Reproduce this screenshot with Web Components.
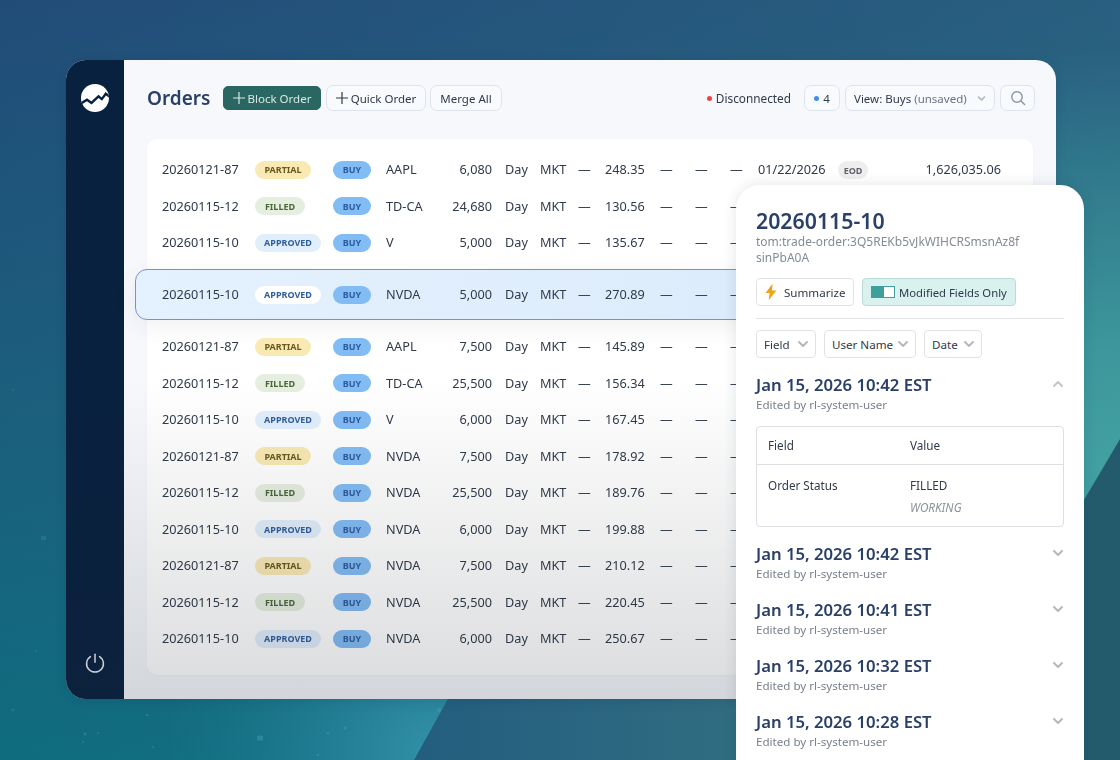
<!DOCTYPE html>
<html lang="en">
<head>
<meta charset="utf-8">
<title>Orders</title>
<style>
html,body{margin:0;padding:0;background:#1d4a72}
body{font-family:"Noto Sans","Liberation Sans",sans-serif;font-size:13px;color:#2f3a4a}
</style>
</head>
<body>
<app-stage>
  <orders-window>
    <order-row id="20260121-87" status="PARTIAL" sym="AAPL" qty="6,080" price="248.35" date="01/22/2026" tif="EOD" amount="1,626,035.06"></order-row>
    <order-row id="20260115-12" status="FILLED" sym="TD-CA" qty="24,680" price="130.56"></order-row>
    <order-row id="20260115-10" status="APPROVED" sym="V" qty="5,000" price="135.67"></order-row>
    <order-row id="20260115-10" status="APPROVED" sym="NVDA" qty="5,000" price="270.89" selected></order-row>
    <order-row id="20260121-87" status="PARTIAL" sym="AAPL" qty="7,500" price="145.89"></order-row>
    <order-row id="20260115-12" status="FILLED" sym="TD-CA" qty="25,500" price="156.34"></order-row>
    <order-row id="20260115-10" status="APPROVED" sym="V" qty="6,000" price="167.45"></order-row>
    <order-row id="20260121-87" status="PARTIAL" sym="NVDA" qty="7,500" price="178.92"></order-row>
    <order-row id="20260115-12" status="FILLED" sym="NVDA" qty="25,500" price="189.76"></order-row>
    <order-row id="20260115-10" status="APPROVED" sym="NVDA" qty="6,000" price="199.88"></order-row>
    <order-row id="20260121-87" status="PARTIAL" sym="NVDA" qty="7,500" price="210.12"></order-row>
    <order-row id="20260115-12" status="FILLED" sym="NVDA" qty="25,500" price="220.45"></order-row>
    <order-row id="20260115-10" status="APPROVED" sym="NVDA" qty="6,000" price="250.67"></order-row>
  </orders-window>
  <detail-panel slot="panel">
    <history-entry when="Jan 15, 2026 10:42 EST" open>
      <change-table></change-table>
    </history-entry>
    <history-entry when="Jan 15, 2026 10:42 EST"></history-entry>
    <history-entry when="Jan 15, 2026 10:41 EST"></history-entry>
    <history-entry when="Jan 15, 2026 10:32 EST"></history-entry>
    <history-entry when="Jan 15, 2026 10:28 EST"></history-entry>
  </detail-panel>
</app-stage>

<script>
const CHEV = (w,c,up)=>`<svg width="${w}" height="${w}" viewBox="0 0 12 12" fill="none" stroke="${c}" stroke-width="2" stroke-linecap="round" stroke-linejoin="round" aria-hidden="true"><path d="${up?'M2 8l4-4 4 4':'M2 4l4 4 4-4'}"/></svg>`;
const PLUS = `<svg width="12" height="12" viewBox="0 0 12 12" fill="none" stroke="currentColor" stroke-width="1.2" aria-hidden="true"><path d="M6 0v12M0 6h12"/></svg>`;

class AppStage extends HTMLElement{
  constructor(){super();this.attachShadow({mode:'open'}).innerHTML=`
  <style>
    :host{display:block;position:relative;width:1120px;height:760px;overflow:hidden;box-sizing:border-box;padding:60px 64px 0 66px;
      background:
        radial-gradient(640px 420px at 1120px 470px,#42a1a1 0,rgba(66,161,161,.8) 30%,rgba(66,161,161,0) 100%),
        linear-gradient(90deg,rgba(60,135,145,0) 0,rgba(60,135,145,.32) 100%),
        linear-gradient(180deg,#214c78 0,#1b5f7d 55%,#0f6c7f 100%);}
    svg.bg{position:absolute;inset:0;width:1120px;height:760px}
    .w{position:relative}
    ::slotted([slot=panel]){position:absolute;left:736px;top:185px}
  </style>
  <svg class="bg" viewBox="0 0 1120 760" aria-hidden="true">
    <defs>
      <linearGradient id="d" gradientUnits="userSpaceOnUse" x1="420" x2="1120" y1="0" y2="0"><stop offset="0" stop-color="#235e7f"/><stop offset=".45" stop-color="#306d81"/><stop offset="1" stop-color="#235a6b"/></linearGradient>
      <radialGradient id="l" cx="435" cy="750" r="270" gradientUnits="userSpaceOnUse"><stop offset="0" stop-color="#3290a8"/><stop offset="1" stop-color="#1c7a93" stop-opacity="0"/></radialGradient>
    </defs>
    <rect x="100" y="560" width="400" height="200" fill="url(#l)"/>
    <polygon points="1120,439 1084,500 1040,575 503,600 414,760 1120,760" fill="url(#d)"/>
    <g fill="#4fb0ba" opacity=".35">
      <rect x="257" y="735.5" width="6" height="5" rx="1.5"/><circle cx="439" cy="710" r="2"/>
      <circle cx="85" cy="734" r="1.4"/><circle cx="83" cy="742" r="1"/><circle cx="147" cy="715" r="1.2"/><circle cx="98" cy="733" r="1"/>
      <circle cx="345" cy="728" r="1.6"/><circle cx="328" cy="733" r="1.2"/><circle cx="318" cy="755" r="1.2"/><circle cx="153" cy="747" r=".9"/>
      <circle cx="13" cy="390" r="1.2" opacity=".5"/><rect x="41" y="536" width="5" height="4" opacity=".6"/><circle cx="36" cy="651" r="1.4" opacity=".5"/><circle cx="13" cy="710" r="1.6" opacity=".6"/>
    </g>
  </svg>
  <div class="w"><slot></slot></div>
  <slot name="panel"></slot>`;}
}
customElements.define('app-stage',AppStage);

class SideRail extends HTMLElement{
  constructor(){super();this.attachShadow({mode:'open'}).innerHTML=`
  <style>
    :host{display:flex;flex-direction:column;align-items:center;justify-content:space-between;width:58px;flex:none;background:#08213f;padding:24px 0 26px;box-sizing:border-box;align-self:stretch}
    svg{display:block}
  </style>
  <svg width="28" height="28" viewBox="0 0 28 28" aria-hidden="true">
    <defs><clipPath id="c"><circle cx="14" cy="14" r="14"/></clipPath></defs>
    <circle cx="14" cy="14" r="14" fill="#fff"/>
    <path clip-path="url(#c)" d="M0 19.5l6-3.8 4.5 3.2 7-6.6 3.3 2.8 4-5.4L29 13" fill="none" stroke="#08213f" stroke-width="2.4" stroke-linejoin="miter"/>
  </svg>
  <svg width="20" height="20" viewBox="0 0 20 20" fill="none" stroke="#e6ebf1" stroke-width="1.5" stroke-linecap="round" aria-hidden="true">
    <path d="M10 1.2v8"/><path d="M5.4 3.6a8.4 8.4 0 1 0 9.2 0"/>
  </svg>`;}
}
customElements.define('side-rail',SideRail);

class UiButton extends HTMLElement{
  constructor(){super();this.attachShadow({mode:'open'}).innerHTML=`
  <style>
    :host{display:inline-flex;align-items:center;justify-content:center;gap:3px;box-sizing:border-box;height:26px;padding:0 8px;border:1px solid #dfe4ec;border-radius:7px;background:#f8fafd;color:#2f3a4a;font-size:11.5px;white-space:nowrap}
    :host([primary]){background:#2a6662;border-color:#2a6662;color:#d9e8e6;height:24px;border-radius:5px;margin-right:1px}
  </style><slot></slot>`;}
}
customElements.define('ui-button',UiButton);

class StatusPill extends HTMLElement{
  constructor(){super();this.attachShadow({mode:'open'}).innerHTML=`
  <style>
    :host{display:inline-flex;align-items:center;justify-content:center;box-sizing:border-box;height:18px;padding:0 9px;margin-top:1px;border-radius:9px;font-size:9px;font-weight:700;white-space:nowrap}
    :host([kind=PARTIAL]){background:#f9eab4;color:#6b5a1e;width:56px;padding:0}
    :host([kind=FILLED]){background:#e6eee0;color:#48683a;width:50px;padding:0}
    :host([kind=APPROVED]){background:#e1eefc;color:#2f5f9e;width:66px;padding:0}
    :host([kind=BUY]){background:#82bcf5;color:#2d5a9c;width:38px;padding:0}
    :host([kind=EOD]){background:#eeeeee;color:#5f636a;padding:0;width:30px}
    :host([kind=APPROVED][on]){background:#fff}
  </style><slot></slot>`;}
}
customElements.define('status-pill',StatusPill);

class OrderRow extends HTMLElement{
  constructor(){
    super();
    const a=n=>this.getAttribute(n)||'';
    const dash='<span class="d">—</span>';
    const on=this.hasAttribute('selected')?'on':'';
    this.attachShadow({mode:'open'}).innerHTML=`
    <style>
      :host{display:grid;grid-template-columns:93px 78px 53px 50px 56px 13px 35px 38px 27px 55px 35px 35px 28px 80px 50px 113px;align-items:center;height:36.5px;padding-left:15px;font-size:12.7px;color:#2f3a4a;white-space:nowrap}
      :host([selected]){box-sizing:border-box;height:51px;margin:8px -12px 8.25px;padding-left:26px;background:linear-gradient(90deg,#e4f1fe,#d9e9fa);border:1px solid #7a8fd0;border-radius:12px;box-shadow:0 6px 22px rgba(60,70,90,.08)}
      .n{text-align:right}
      .s{justify-self:start}
      .d{color:#3a4553}
    </style>
    <span>${a('id')}</span>
    <status-pill class="s" kind="${a('status')}" ${on}>${a('status')}</status-pill>
    <status-pill class="s" kind="BUY">BUY</status-pill>
    <span>${a('sym')}</span>
    <span class="n">${a('qty')}</span><span></span>
    <span>Day</span><span>MKT</span>${dash}
    <span>${a('price')}</span>${dash}${dash}${dash}
    <span>${a('date')}</span>
    <span>${a('tif')?`<status-pill kind="EOD">${a('tif')}</status-pill>`:''}</span>
    <span class="n">${a('amount')}</span>`;
  }
}
customElements.define('order-row',OrderRow);

class OrdersWindow extends HTMLElement{
  constructor(){super();this.attachShadow({mode:'open'}).innerHTML=`
  <style>
    :host{display:flex;position:relative;width:990px;height:639px;border-radius:20px;overflow:hidden;background:#f6f8fc;box-shadow:0 3px 12px rgba(5,30,60,.12)}
    main{flex:1;min-width:0;box-sizing:border-box;padding:25px 23px 0 23px}
    header{display:flex;align-items:center;height:26px;margin:0 -2px 28px 0}
    h1{margin:0;width:76px;font-size:19px;font-weight:600;color:#2b4069;white-space:nowrap}
    .g{display:flex;gap:4px;align-items:center}
    .sp{flex:1}
    .dot{width:5px;height:5px;border-radius:50%;background:#ef4444;display:inline-block;flex:none}
    .st{display:flex;align-items:center;gap:4px;font-size:11.8px;margin-right:13px}
    .card{background:#fff;border-radius:10px;padding:12px 0 18.75px;box-shadow:0 1px 3px rgba(30,50,80,.03)}
    .fade{position:absolute;inset:0;pointer-events:none;background:linear-gradient(180deg,rgba(30,35,45,0) 50%,rgba(30,35,45,.16) 100%)}
    .m{color:#6b7480}
    .right{gap:5px}
  </style>
  <side-rail></side-rail>
  <main>
    <header>
      <h1>Orders</h1>
      <div class="g">
        <ui-button primary style="width:98px">${PLUS}Block Order</ui-button>
        <ui-button style="width:100px">${PLUS}Quick Order</ui-button>
        <ui-button style="width:72px">Merge All</ui-button>
      </div>
      <span class="sp"></span>
      <div class="st"><span class="dot"></span>Disconnected</div>
      <div class="g right">
        <ui-button style="width:36px"><span class="dot" style="background:#3f8ef2;margin-right:1px"></span>4</ui-button>
        <ui-button style="width:150px;justify-content:space-between"><span>View: Buys <span class="m">(unsaved)</span></span>${CHEV(9,'#aab2bd')}</ui-button>
        <ui-button style="width:35px;padding:0"><svg width="16" height="16" viewBox="0 0 16 16" fill="none" stroke="#8c96a3" stroke-width="1.4" stroke-linecap="round" aria-hidden="true"><circle cx="7" cy="7" r="5.2"/><path d="M11 11l3.6 3.6"/></svg></ui-button>
      </div>
    </header>
    <div class="card"><slot></slot></div>
  </main>
  <div class="fade"></div>`;}
}
customElements.define('orders-window',OrdersWindow);

class HistoryEntry extends HTMLElement{
  constructor(){
    super();
    const open=this.hasAttribute('open');
    this.attachShadow({mode:'open'}).innerHTML=`
    <style>
      :host{display:block;margin-bottom:14px}
      .t{display:flex;align-items:center;justify-content:space-between;height:24px}
      h3{margin:0;font-size:16.7px;font-weight:600;color:#2b4069;white-space:nowrap}
      p{margin:0;height:18px;line-height:18px;font-size:11.6px;color:#79818c}
      svg{display:block}
    </style>
    <div class="t"><h3>${this.getAttribute('when')}</h3>${CHEV(12,open?'#c2c6cc':'#b4b9c0',open)}</div>
    <p>Edited by rl-system-user</p>
    <slot></slot>`;
  }
}
customElements.define('history-entry',HistoryEntry);

class ChangeTable extends HTMLElement{
  constructor(){super();this.attachShadow({mode:'open'}).innerHTML=`
  <style>
    :host{display:block;box-sizing:border-box;margin-top:12px;margin-bottom:1px;border:1px solid #dcdfe4;border-radius:4px;font-size:11.7px;color:#2f3a4a}
    .r{display:grid;grid-template-columns:142px 1fr;padding:0 11px}
    .h{height:38px;box-sizing:border-box;padding-bottom:2px;align-items:center;border-bottom:1px solid #dcdfe4}
    .b{height:61px;padding-top:9px;box-sizing:border-box;line-height:22px}
    i{color:#8c929b}
  </style>
  <div class="r h"><span>Field</span><span>Value</span></div>
  <div class="r b"><span>Order Status</span><span>FILLED<br><i>WORKING</i></span></div>`;}
}
customElements.define('change-table',ChangeTable);

class DetailPanel extends HTMLElement{
  constructor(){super();this.attachShadow({mode:'open'}).innerHTML=`
  <style>
    :host{display:block;box-sizing:border-box;width:348px;height:640px;padding:23px 20px 0;background:#fff;border-radius:24px 24px 0 0;box-shadow:0 0 14px rgba(20,40,70,.12)}
    h2{margin:0;font-size:21.3px;line-height:26px;font-weight:600;color:#2b4069}
    .id{margin:0 0 12px;font-size:12px;line-height:16px;color:#848b95;white-space:nowrap}
    .btns{display:flex;gap:8px}
    .b{display:inline-flex;align-items:center;box-sizing:border-box;height:28px;border:1px solid #dfe3e8;border-radius:4px;font-size:11.6px;padding:0 7px;background:#fff;gap:6px;color:#2f3a4a;white-space:nowrap}
    .on{background:#d9f2ef;border-color:#b9dcd9;gap:4px;width:154px;font-size:11.3px}
    .tg{width:24px;height:12px;background:#3f9f9b;position:relative;display:block;margin-left:1px;flex:none}
    .tg::after{content:"";position:absolute;right:1px;top:1px;width:10px;height:10px;background:#fff}
    hr{border:0;border-top:1px solid #e3e5e9;margin:12px 0 11px}
    .f{display:flex;gap:8px;margin-bottom:14px}
    .f .b{justify-content:space-between;padding:0 6px 0 7px;gap:0}
    svg{display:block}
  </style>
  <h2>20260115-10</h2>
  <p class="id">tom:trade-order:3Q5REKb5vJkWIHCRSmsnAz8f<br>sinPbA0A</p>
  <div class="btns">
    <span class="b" style="width:98px"><svg width="14" height="18" viewBox="0 0 14 18" aria-hidden="true"><path d="M8.5 .8L1.5 10h4.2L4.6 17.2 12.4 7.6H8z" fill="#eda419"/></svg>Summarize</span>
    <span class="b on"><span class="tg"></span>Modified Fields Only</span>
  </div>
  <hr>
  <div class="f">
    <span class="b" style="width:60px">Field${CHEV(12,'#b4b9c0')}</span>
    <span class="b" style="width:92px">User Name${CHEV(12,'#b4b9c0')}</span>
    <span class="b" style="width:58px">Date${CHEV(12,'#b4b9c0')}</span>
  </div>
  <slot></slot>`;}
}
customElements.define('detail-panel',DetailPanel);
</script>
</body>
</html>
